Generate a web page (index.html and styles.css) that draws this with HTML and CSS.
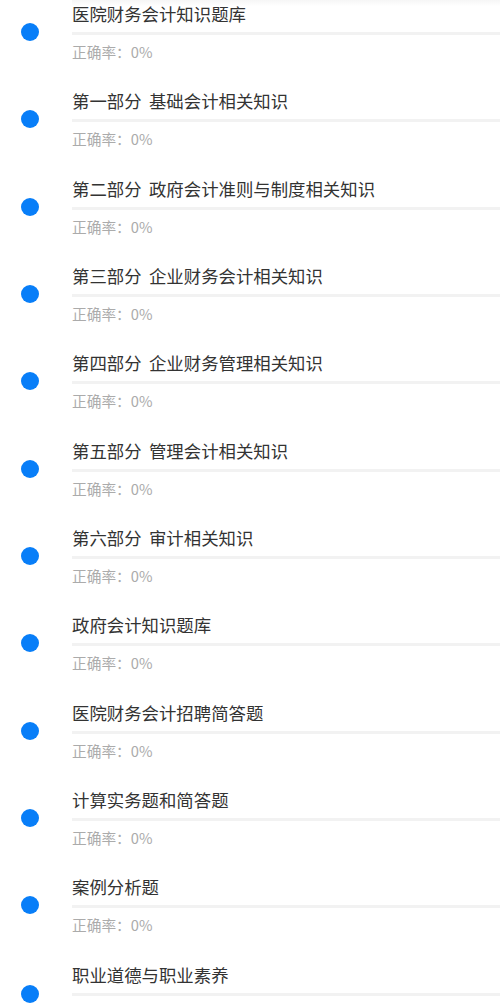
FILE: index.html
```html
<!DOCTYPE html>
<html lang="zh-CN">
<head>
<meta charset="utf-8">
<title>题库</title>
<link rel="stylesheet" href="styles.css">
</head>
<body>
<div class="page">
  <div class="top-shade"></div>
  <ul class="list">
    <li class="item"><span class="dot"></span><div class="info"><div class="title">医院财务会计知识题库</div><div class="bar"></div><div class="rate">正确率：0%</div></div></li>
    <li class="item"><span class="dot"></span><div class="info"><div class="title">第一部分 基础会计相关知识</div><div class="bar"></div><div class="rate">正确率：0%</div></div></li>
    <li class="item"><span class="dot"></span><div class="info"><div class="title">第二部分 政府会计准则与制度相关知识</div><div class="bar"></div><div class="rate">正确率：0%</div></div></li>
    <li class="item"><span class="dot"></span><div class="info"><div class="title">第三部分 企业财务会计相关知识</div><div class="bar"></div><div class="rate">正确率：0%</div></div></li>
    <li class="item"><span class="dot"></span><div class="info"><div class="title">第四部分 企业财务管理相关知识</div><div class="bar"></div><div class="rate">正确率：0%</div></div></li>
    <li class="item"><span class="dot"></span><div class="info"><div class="title">第五部分 管理会计相关知识</div><div class="bar"></div><div class="rate">正确率：0%</div></div></li>
    <li class="item"><span class="dot"></span><div class="info"><div class="title">第六部分 审计相关知识</div><div class="bar"></div><div class="rate">正确率：0%</div></div></li>
    <li class="item"><span class="dot"></span><div class="info"><div class="title">政府会计知识题库</div><div class="bar"></div><div class="rate">正确率：0%</div></div></li>
    <li class="item"><span class="dot"></span><div class="info"><div class="title">医院财务会计招聘简答题</div><div class="bar"></div><div class="rate">正确率：0%</div></div></li>
    <li class="item"><span class="dot"></span><div class="info"><div class="title">计算实务题和简答题</div><div class="bar"></div><div class="rate">正确率：0%</div></div></li>
    <li class="item"><span class="dot"></span><div class="info"><div class="title">案例分析题</div><div class="bar"></div><div class="rate">正确率：0%</div></div></li>
    <li class="item"><span class="dot"></span><div class="info"><div class="title">职业道德与职业素养</div><div class="bar"></div></div></li>
  </ul>
</div>
</body>
</html>
```
FILE: styles.css
```css
html, body {
  margin: 0;
  padding: 0;
  background: #ffffff;
  overflow: hidden;
}

body {
  font-family: "Noto Sans CJK SC", "Noto Sans", sans-serif;
}

.page {
  position: relative;
  width: 500px;
  height: 1005px;
  overflow: hidden;
}

.top-shade {
  position: absolute;
  top: 0;
  left: 72px;
  right: 0;
  height: 6px;
  background: linear-gradient(#f6f6f6, rgba(255, 255, 255, 0));
  z-index: 1;
}

.list {
  list-style: none;
  margin: -12px 0 0 0;
  padding: 0;
}

.item {
  display: flex;
  align-items: center;
  padding: 13.165px 0;
}

.item:last-child {
  align-items: flex-start;
}

.item:last-child .dot {
  margin-top: 23px;
}

.dot {
  flex: none;
  width: 18px;
  height: 18px;
  margin-left: 21px;
  margin-right: 33px;
  border-radius: 50%;
  background: #087ef8;
  position: relative;
  top: 0.5px;
}

.info {
  flex: 1;
  min-width: 0;
  display: flex;
  flex-direction: column;
}

.title {
  font-size: 17.4px;
  line-height: 26px;
  color: #333333;
  white-space: nowrap;
  word-spacing: 3.5px;
  margin-bottom: 5px;
}

.bar {
  height: 3px;
  background: #f2f2f2;
  margin-bottom: 7px;
}

.rate {
  font-size: 14.7px;
  line-height: 20px;
  color: #ababab;
}
```
